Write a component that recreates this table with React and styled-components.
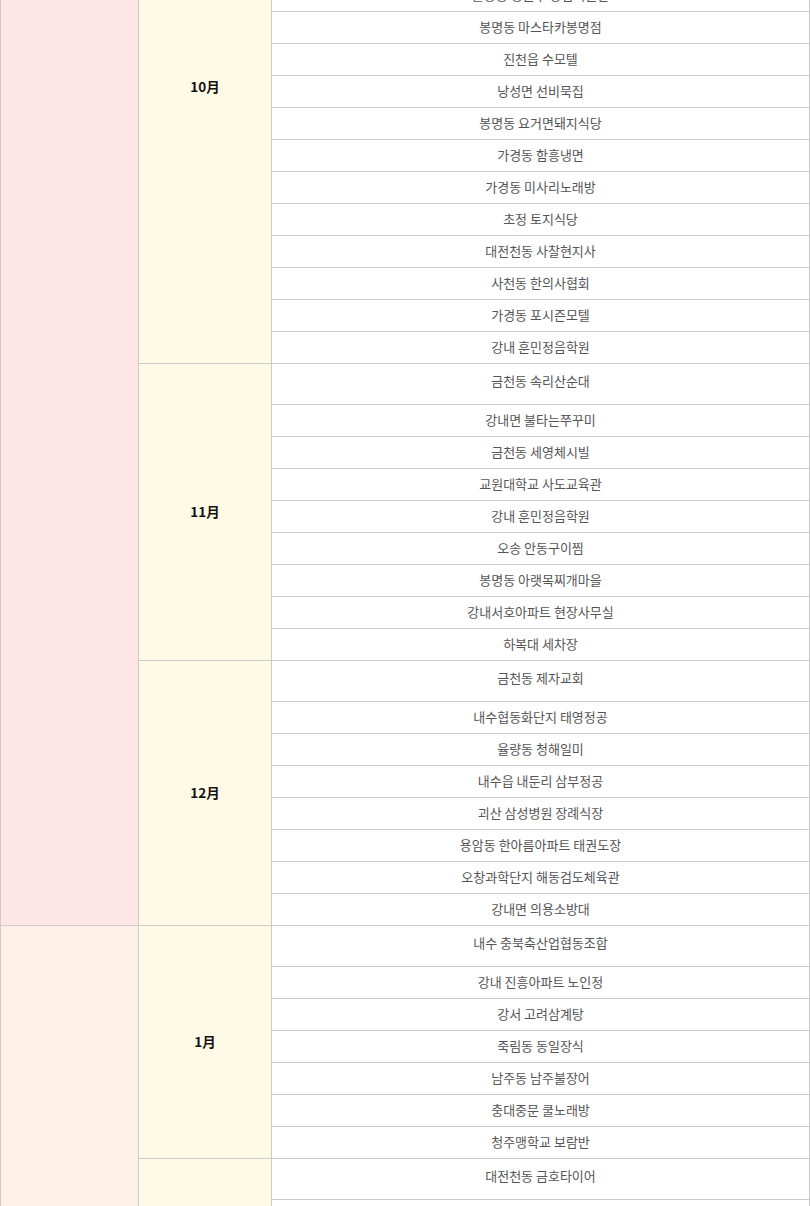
import styled, { createGlobalStyle } from "styled-components";

const GlobalStyle = createGlobalStyle`
  html, body {
    margin: 0;
    padding: 0;
    background: #ffffff;
    overflow: hidden;
  }
  body {
    font-family: "Noto Sans CJK KR", "Noto Sans", sans-serif;
  }
`;

const years = [
  {
    year: "2016",
    color: "#ffe6e6",
    months: [
      {
        label: "10月",
        places: [
          "옥산면 대한축산",
          "가경동 리치모텔",
          "복대동 한우마을",
          "분평동 청솔아파트",
          "운천동 청주중앙교회",
          "율량동 청원구 창업지원관",
          "봉명동 마스타카봉명점",
          "진천읍 수모텔",
          "낭성면 선비묵집",
          "봉명동 요거면돼지식당",
          "가경동 함흥냉면",
          "가경동 미사리노래방",
          "초정 토지식당",
          "대전천동 사찰현지사",
          "사천동 한의사협회",
          "가경동 포시즌모텔",
          "강내 훈민정음학원",
        ],
      },
      {
        label: "11月",
        places: [
          "금천동 속리산순대",
          "강내면 불타는쭈꾸미",
          "금천동 세영체시빌",
          "교원대학교 사도교육관",
          "강내 훈민정음학원",
          "오송 안동구이찜",
          "봉명동 아랫목찌개마을",
          "강내서호아파트 현장사무실",
          "하복대 세차장",
        ],
      },
      {
        label: "12月",
        places: [
          "금천동 제자교회",
          "내수협동화단지 태영정공",
          "율량동 청해일미",
          "내수읍 내둔리 삼부정공",
          "괴산 삼성병원 장례식장",
          "용암동 한아름아파트 태권도장",
          "오창과학단지 해동검도체육관",
          "강내면 의용소방대",
        ],
      },
    ],
  },
  {
    year: "2017",
    color: "#fff0e6",
    months: [
      {
        label: "1月",
        places: [
          "내수 충북축산업협동조합",
          "강내 진흥아파트 노인정",
          "강서 고려삼계탕",
          "죽림동 동일장식",
          "남주동 남주불장어",
          "충대중문 쿨노래방",
          "청주맹학교 보람반",
        ],
      },
      {
        label: "2月",
        places: [
          "대전천동 금호타이어",
          "복대동 현대아파트 관리사무소",
          "사직동 한빛교회",
          "오창 호수공원 관리동",
          "분평동 주공아파트 경로당",
          "용정동 한마음식당",
          "가경동 터미널사우나",
          "수곡동 청주여고 식당",
        ],
      },
    ],
  },
];

export default function App() {
  return (
    <>
      <GlobalStyle />
      <Viewport>
        <ScheduleTable>
          <colgroup>
            <col style={{ width: 138 }} />
            <col style={{ width: 133 }} />
            <col />
          </colgroup>
          <tbody>
            {years.map((y) => {
              const span = y.months.reduce((n, m) => n + m.places.length, 0);
              return y.months.map((m, mi) =>
                m.places.map((place, pi) => (
                  <tr key={`${y.year}-${m.label}-${pi}`}>
                    {mi === 0 && pi === 0 && (
                      <YearCell rowSpan={span} $bg={y.color} />
                    )}
                    {pi === 0 && (
                      <MonthCell rowSpan={m.places.length}>{m.label}</MonthCell>
                    )}
                    <PlaceCell $first={pi === 0}>{place}</PlaceCell>
                  </tr>
                ))
              );
            })}
          </tbody>
        </ScheduleTable>
      </Viewport>
    </>
  );
}

const Viewport = styled.div`
  width: 810px;
  margin-top: -190px;
`;

const ScheduleTable = styled.table`
  width: 810px;
  table-layout: fixed;
  border-collapse: collapse;
  border: 1px solid #cccccc;
`;

const YearCell = styled.td`
  background: ${(p) => p.$bg};
  border: 1px solid #cccccc;
  padding: 0;
`;

const MonthCell = styled.td`
  background: #fffae6;
  border: 1px solid #cccccc;
  padding: 0 0 3px;
  text-align: center;
  vertical-align: middle;
  font-size: 13.5px;
  font-weight: bold;
  color: #111111;
`;

const PlaceCell = styled.td`
  border: 1px solid #cccccc;
  height: ${(p) => (p.$first ? "41px" : "32px")};
  box-sizing: border-box;
  padding: ${(p) => (p.$first ? "0 0 7px" : "0 0 1px")};
  text-align: center;
  vertical-align: middle;
  font-size: 13px;
  line-height: 18px;
  color: #555555;
`;
